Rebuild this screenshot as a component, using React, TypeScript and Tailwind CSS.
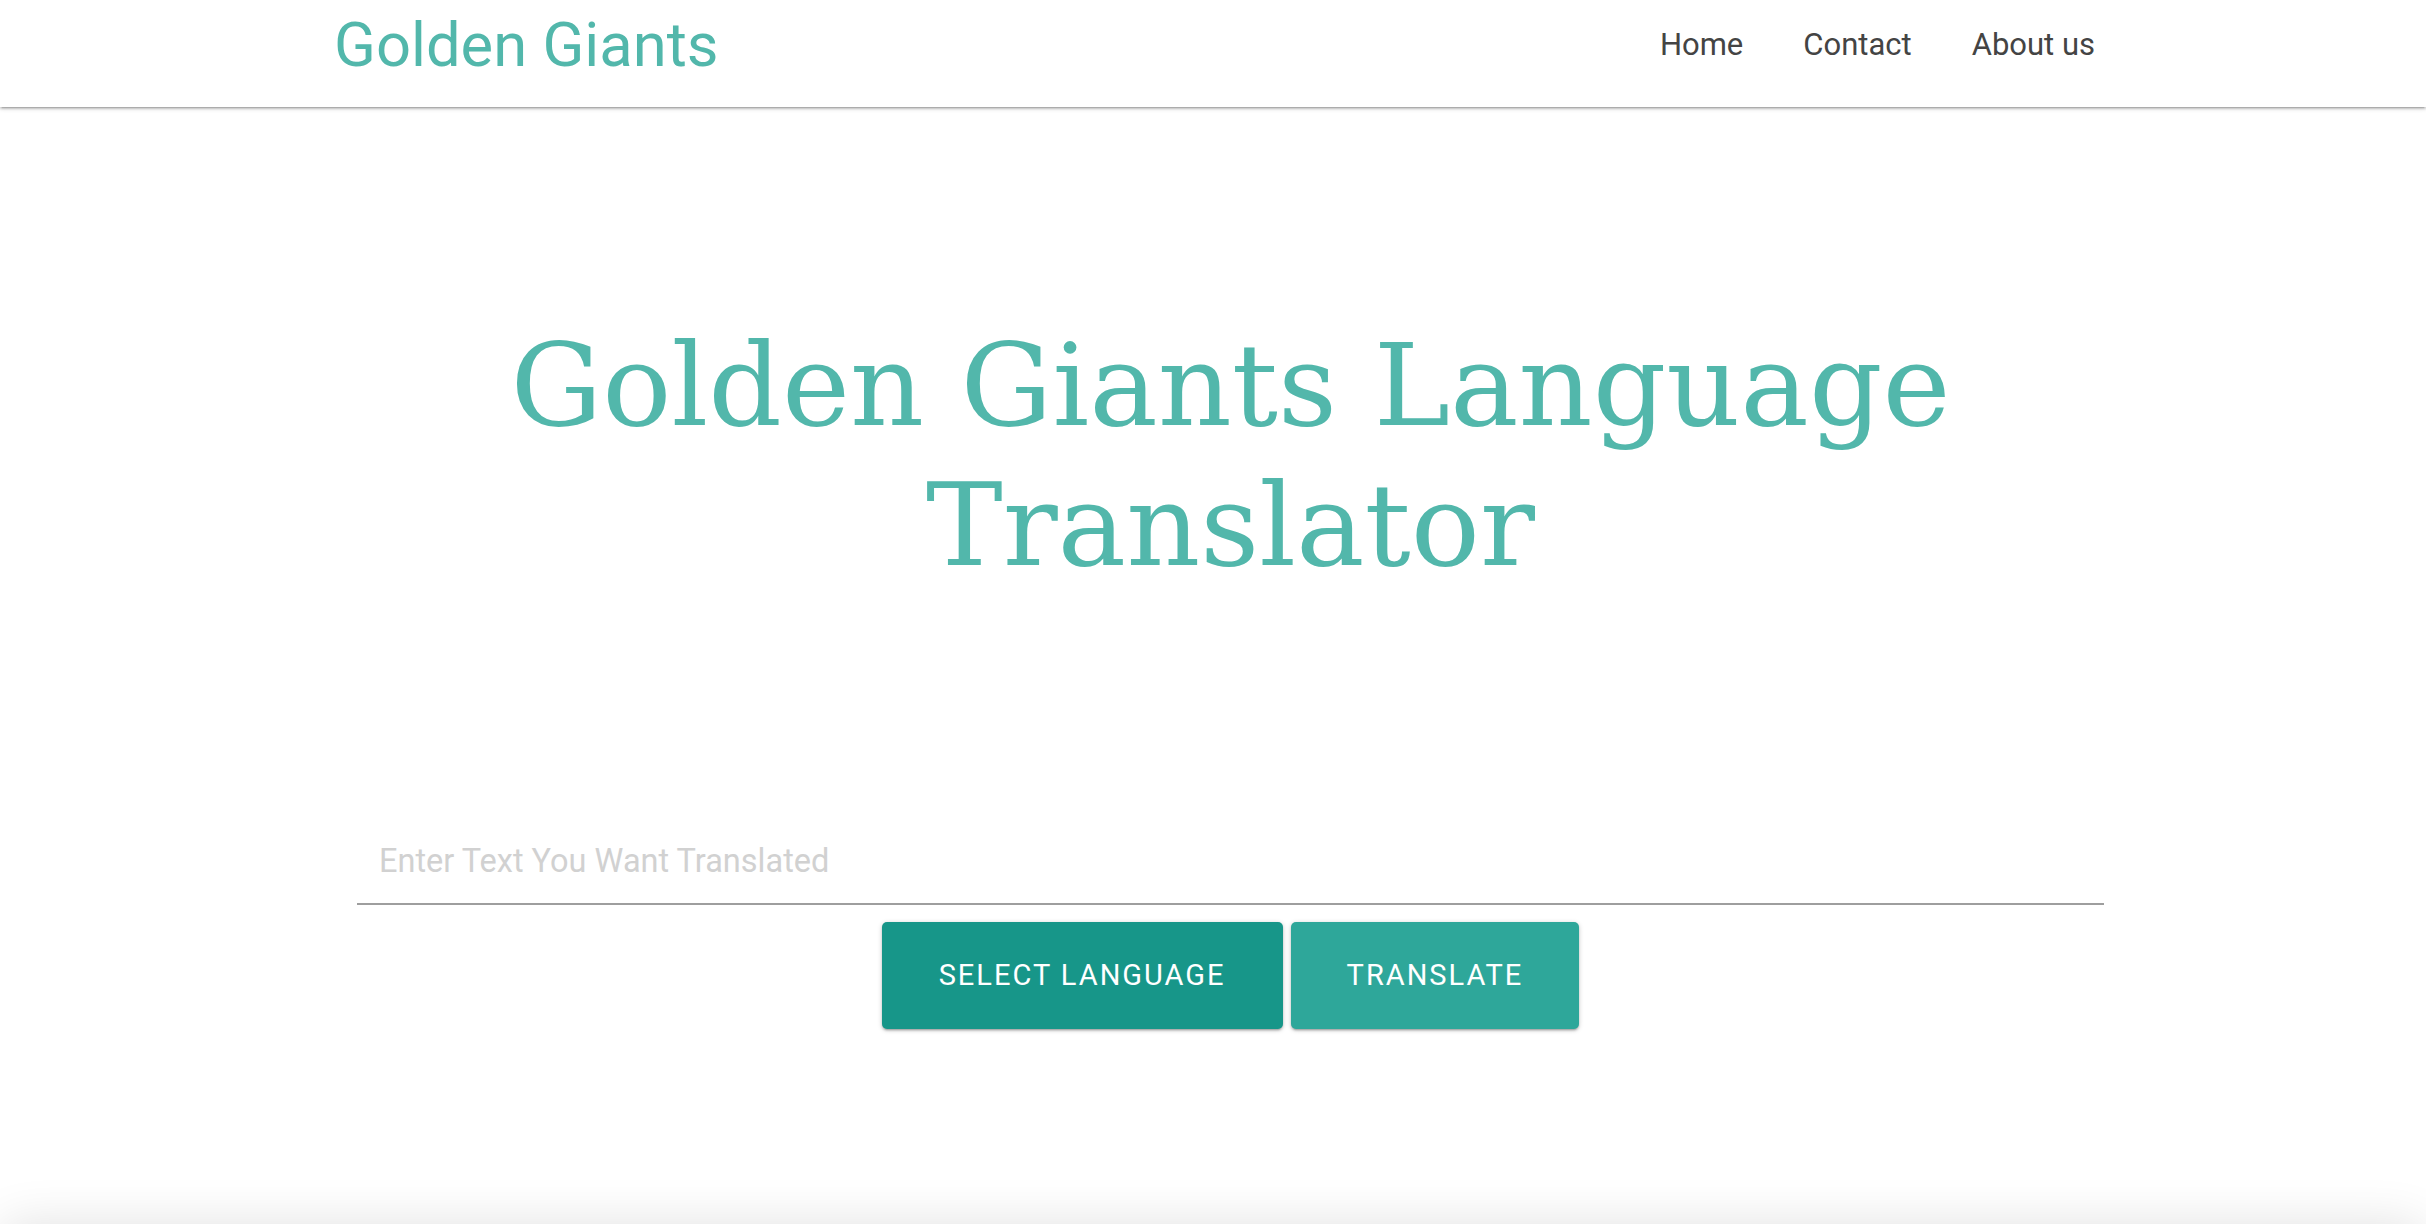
import React from "react";

export default function App() {
  return (
    <div className="h-[1224px] w-full overflow-hidden bg-white flex flex-col" style={{ fontFamily: "Roboto, 'Liberation Sans', sans-serif" }}>
      <div className="flex-none h-[1224px] flex flex-col">
        <nav className="relative z-10 h-[107px] flex-none bg-white shadow-[0_2px_2px_0_rgba(0,0,0,0.14),0_3px_1px_-2px_rgba(0,0,0,0.12),0_1px_5px_0_rgba(0,0,0,0.2)]">
          <div className="ml-[334px] w-[1792px] h-full flex items-center justify-between pb-[15px]">
            <a className="text-[61.5px] leading-none text-[#52b7ab]">Golden Giants</a>
            <ul className="flex items-center mb-[2px]">
              <li className="px-[30px] text-[31px] text-[#444444]">Home</li>
              <li className="px-[30px] text-[31px] text-[#444444]">Contact</li>
              <li className="pl-[30px] pr-[31px] text-[31px] text-[#444444]">About us</li>
            </ul>
          </div>
        </nav>
        <main className="ml-[357px] w-[1747px] flex flex-col items-center">
          <h1 className="mt-[208px] text-center text-[115px] leading-[140px] text-[#52b7ab] font-normal" style={{ fontFamily: "'DejaVu Serif', serif" }}>
            Golden Giants Language
            <br />
            Translator
          </h1>
          <input
            type="text"
            placeholder="Enter Text You Want Translated"
            className="mt-[224px] w-full h-[86px] border-b-2 border-[#9e9e9e] pl-[22px] text-[32.5px] outline-none placeholder:text-[#d1d1d1] bg-transparent"
          />
          <div className="mt-[17px] flex gap-[8px]">
            <button className="h-[107px] px-[57px] rounded-[5px] bg-[#179689] text-white text-[29px] uppercase tracking-[2px] shadow-[0_2px_2px_0_rgba(0,0,0,0.14),0_3px_1px_-2px_rgba(0,0,0,0.12),0_1px_5px_0_rgba(0,0,0,0.2)]">
              Select Language
            </button>
            <button className="h-[107px] px-[56px] rounded-[5px] bg-[#2ea79a] text-white text-[29px] uppercase tracking-[2px] shadow-[0_2px_2px_0_rgba(0,0,0,0.14),0_3px_1px_-2px_rgba(0,0,0,0.12),0_1px_5px_0_rgba(0,0,0,0.2)]">
              Translate
            </button>
          </div>
        </main>
      </div>
      <footer className="flex-none h-[200px] w-full rounded-[20px] bg-white shadow-[0_0_50px_rgba(0,0,0,0.12)]"></footer>
    </div>
  );
}
